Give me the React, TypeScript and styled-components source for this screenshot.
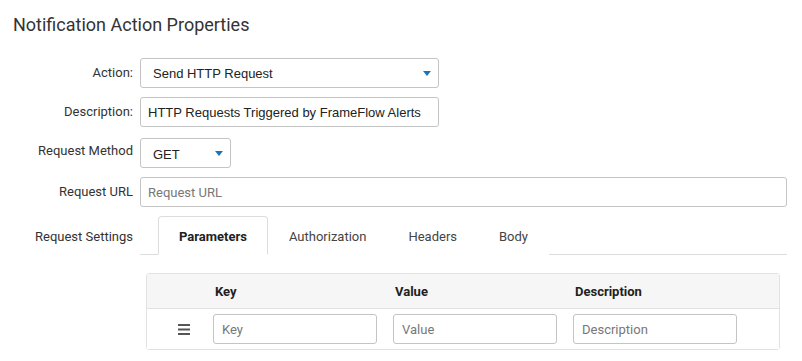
import React from "react";
import styled, { createGlobalStyle } from "styled-components";

const Global = createGlobalStyle`
  html, body { margin: 0; padding: 0; background: #fff; }
  body { font-family: Roboto, "Liberation Sans", sans-serif; color: #333; }
  * { box-sizing: border-box; }
`;

const Page = styled.div`
  padding: 13px 15px 0 13px;
  width: 802px;
`;

const Title = styled.h1`
  margin: 0;
  font-family: Roboto, sans-serif;
  font-weight: 400;
  font-size: 18px;
  line-height: 24px;
  color: #333;
`;

const Form = styled.div`
  margin-top: 21px;
  display: flex;
  flex-direction: column;
  gap: 10px;
`;

const Row = styled.div<{ $top?: number }>`
  display: flex;
  align-items: flex-start;
  gap: 7px;
  margin-top: ${(p) => p.$top ?? 0}px;
`;

const Label = styled.label<{ $pt?: number }>`
  width: 120px;
  flex: none;
  text-align: right;
  font-size: 13px;
  line-height: 16px;
  padding-top: ${(p) => p.$pt ?? 7}px;
  color: #333;
  white-space: nowrap;
`;

const Field = styled.div`
  flex: 1;
  min-width: 0;
`;

const SelectBox = styled.div<{ $w: number }>`
  width: ${(p) => p.$w}px;
  height: 30px;
  border: 1px solid #c4c4c4;
  border-radius: 3px;
  display: flex;
  align-items: center;
  justify-content: space-between;
  padding: 0 7px 0 12px;
  font-family: "Liberation Sans", Arial, sans-serif;
  font-size: 13px;
  color: #222;
  background: #fff;
`;

const SelectValue = styled.span<{ $pt?: number }>`
  padding-top: ${(p) => p.$pt ?? 0}px;
`;

const Caret = styled.span`
  width: 0;
  height: 0;
  border-left: 4.5px solid transparent;
  border-right: 4.5px solid transparent;
  border-top: 5px solid #1f73b7;
  margin-top: 1px;
`;

const TextInput = styled.input<{ $w?: number; $sans?: boolean }>`
  width: ${(p) => (p.$w ? `${p.$w}px` : "100%")};
  height: 30px;
  border: 1px solid #c4c4c4;
  border-radius: 3px;
  padding: 0 7px;
  font-family: ${(p) => (p.$sans ? `"Liberation Sans", Arial, sans-serif` : `Roboto, sans-serif`)};
  font-size: 13px;
  color: #222;
  background: #fff;
  outline: none;
  &::placeholder { color: #777; font-family: Roboto, sans-serif; }
`;

const Tabs = styled.div`
  display: flex;
  padding-left: 18px;
  border-bottom: 1px solid #ddd;
  height: 39px;
`;

const Tab = styled.div<{ $active?: boolean }>`
  height: 39px;
  padding: 1px 20px 0 20px;
  display: flex;
  align-items: center;
  font-size: 13px;
  font-weight: ${(p) => (p.$active ? 700 : 400)};
  color: ${(p) => (p.$active ? "#222" : "#444")};
  border: 1px solid ${(p) => (p.$active ? "#ddd" : "transparent")};
  border-bottom: 1px solid ${(p) => (p.$active ? "#fff" : "transparent")};
  border-radius: 4px 4px 0 0;
  margin-bottom: -1px;
  background: #fff;
`;

const Table = styled.div`
  margin: 18px 7px 0 6px;
  border: 1px solid #e2e2e2;
  border-radius: 3px;
`;

const Grid = styled.div<{ $head?: boolean }>`
  display: grid;
  grid-template-columns: 66px 180px 180px 180px 1fr;
  align-items: center;
  height: ${(p) => (p.$head ? 35 : 40)}px;
  background: ${(p) => (p.$head ? "#f6f6f6" : "#fff")};
  border-bottom: ${(p) => (p.$head ? "1px solid #e2e2e2" : "none")};
`;

const HeadCell = styled.div`
  font-size: 13px;
  font-weight: 700;
  color: #222;
  padding-left: 2px;
  padding-top: 1px;
`;

const Handle = styled.div`
  display: flex;
  justify-content: flex-end;
  padding-right: 23px;
  color: #555;
`;

const CellInput = styled(TextInput)`
  width: 164px;
  padding: 0 8px;
`;

function HamburgerIcon() {
  return (
    <svg width="12" height="11" viewBox="0 0 12 11">
      <rect x="0" y="0" width="12" height="2" fill="#555" />
      <rect x="0" y="4.5" width="12" height="2" fill="#555" />
      <rect x="0" y="9" width="12" height="2" fill="#555" />
    </svg>
  );
}

export default function App() {
  return (
    <Page>
      <Global />
      <Title>Notification Action Properties</Title>
      <Form>
        <Row>
          <Label>Action:</Label>
          <Field>
            <SelectBox $w={299}>
              <SelectValue>Send HTTP Request</SelectValue>
              <Caret />
            </SelectBox>
          </Field>
        </Row>
        <Row $top={-1}>
          <Label>Description:</Label>
          <Field>
            <TextInput $w={299} $sans defaultValue="HTTP Requests Triggered by FrameFlow Alerts" />
          </Field>
        </Row>
        <Row $top={1}>
          <Label $pt={5}>Request Method</Label>
          <Field>
            <SelectBox $w={91}>
              <SelectValue $pt={2}>GET</SelectValue>
              <Caret />
            </SelectBox>
          </Field>
        </Row>
        <Row $top={-1}>
          <Label>Request URL</Label>
          <Field>
            <TextInput placeholder="Request URL" />
          </Field>
        </Row>
        <Row $top={-1}>
          <Label $pt={13}>Request Settings</Label>
          <Field>
            <Tabs>
              <Tab $active>Parameters</Tab>
              <Tab>Authorization</Tab>
              <Tab>Headers</Tab>
              <Tab>Body</Tab>
            </Tabs>
            <Table>
              <Grid $head>
                <div />
                <HeadCell>Key</HeadCell>
                <HeadCell>Value</HeadCell>
                <HeadCell>Description</HeadCell>
                <div />
              </Grid>
              <Grid>
                <Handle>
                  <HamburgerIcon />
                </Handle>
                <CellInput placeholder="Key" />
                <CellInput placeholder="Value" />
                <CellInput placeholder="Description" />
                <div />
              </Grid>
            </Table>
          </Field>
        </Row>
      </Form>
    </Page>
  );
}
